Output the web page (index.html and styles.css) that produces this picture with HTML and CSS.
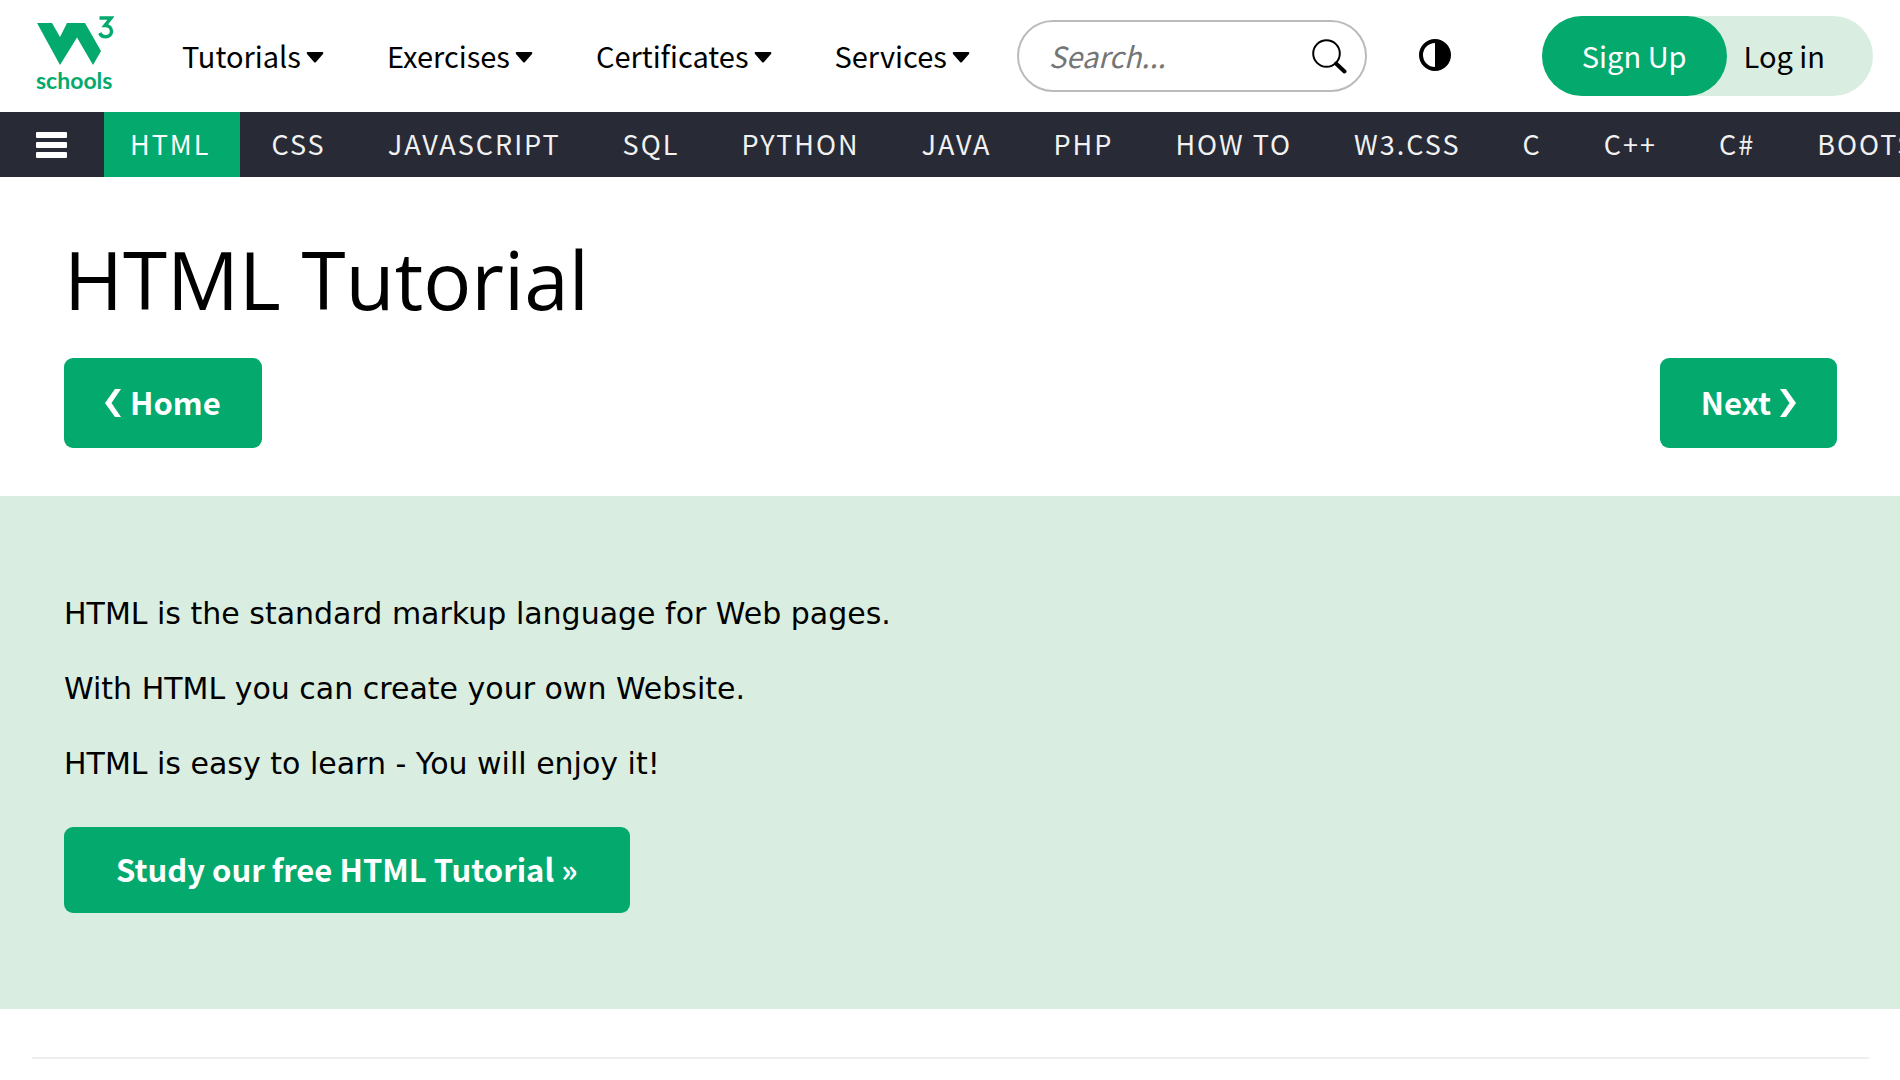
FILE: index.html
```html
<!DOCTYPE html>
<html lang="en">
<head>
<meta charset="utf-8">
<title>HTML Tutorial</title>
<link rel="stylesheet" href="styles.css">
</head>
<body>
<header class="topbar">
  <a class="logo" href="#" aria-label="W3Schools home">
    <svg class="logo-mark" viewBox="0 0 78 50" aria-hidden="true">
      <path class="logo-w" d="M1 7H16L24 21L31 7H49L65 35L57 49L41 21.500L24 49Z"/>
      <path class="logo-three" d="M63.500 2H75L69 9.500C73 9.500 75.500 12 75.500 15.300C75.500 18.700 73 20.800 69.700 20.800C67 20.800 64.800 19.500 63.800 17"/>
    </svg>
    <span class="logo-text">schools</span>
  </a>
  <nav class="menus" aria-label="Main">
    <a class="menu" href="#">Tutorials<svg class="caret" viewBox="0 0 18 11" aria-hidden="true"><path d="M1.500 0H16.500Q18 .5 17 2L10 10Q9 11 8 10L1 2Q0 .5 1.500 0Z"/></svg></a>
    <a class="menu" href="#">Exercises<svg class="caret" viewBox="0 0 18 11" aria-hidden="true"><path d="M1.500 0H16.500Q18 .5 17 2L10 10Q9 11 8 10L1 2Q0 .5 1.500 0Z"/></svg></a>
    <a class="menu" href="#">Certificates<svg class="caret" viewBox="0 0 18 11" aria-hidden="true"><path d="M1.500 0H16.500Q18 .5 17 2L10 10Q9 11 8 10L1 2Q0 .5 1.500 0Z"/></svg></a>
    <a class="menu" href="#">Services<svg class="caret" viewBox="0 0 18 11" aria-hidden="true"><path d="M1.500 0H16.500Q18 .5 17 2L10 10Q9 11 8 10L1 2Q0 .5 1.500 0Z"/></svg></a>
  </nav>
  <form class="search">
    <input class="search-input" type="text" placeholder="Search..." aria-label="Search">
    <button class="icon-button" type="button" aria-label="Search">
      <svg class="search-icon" viewBox="0 0 35 35" aria-hidden="true"><circle cx="14.500" cy="14.500" r="13.300"/><path d="M24 24.500L32.500 32.500"/></svg>
    </button>
  </form>
  <button class="icon-button contrast" type="button" aria-label="Toggle dark mode">
    <svg class="contrast-icon" viewBox="0 0 32 32" aria-hidden="true"><path fill-rule="evenodd" d="M16 0A16 16 0 1 1 16 32A16 16 0 1 1 16 0ZM16 4A12 12 0 0 0 16 28Z"/></svg>
  </button>
  <div class="account">
    <a class="signup" href="#">Sign Up</a>
    <a class="login" href="#">Log in</a>
  </div>
</header>
<nav class="subjects" aria-label="Subjects">
  <button class="icon-button burger" type="button" aria-label="Menu">
    <svg class="burger-icon" viewBox="0 0 31 26" aria-hidden="true"><rect width="31" height="6" rx="1"/><rect y="10" width="31" height="6" rx="1"/><rect y="20" width="31" height="6" rx="1"/></svg>
  </button>
  <a class="subject active" href="#">HTML</a>
  <a class="subject" href="#">CSS</a>
  <a class="subject" href="#">JAVASCRIPT</a>
  <a class="subject" href="#">SQL</a>
  <a class="subject" href="#">PYTHON</a>
  <a class="subject" href="#">JAVA</a>
  <a class="subject" href="#">PHP</a>
  <a class="subject" href="#">HOW TO</a>
  <a class="subject" href="#">W3.CSS</a>
  <a class="subject" href="#">C</a>
  <a class="subject" href="#">C++</a>
  <a class="subject" href="#">C#</a>
  <a class="subject" href="#">BOOTSTRAP</a>
</nav>
<main>
  <div class="title">
    <h1>HTML Tutorial</h1>
    <div class="pager">
      <a class="button" href="#"><svg class="chevron" viewBox="0 0 16 28" aria-hidden="true"><path d="M10 0H16L6.500 14L16 28H10L0 14Z"/></svg>Home</a>
      <a class="button" href="#">Next<svg class="chevron" viewBox="0 0 16 28" aria-hidden="true"><path d="M0 0H6L16 14L6 28H0L9.500 14Z"/></svg></a>
    </div>
  </div>
  <section class="intro">
    <p>HTML is the standard markup language for Web pages.</p>
    <p>With HTML you can create your own Website.</p>
    <p>HTML is easy to learn - You will enjoy it!</p>
    <a class="button study" href="#">Study our free HTML Tutorial »</a>
  </section>
  <hr class="rule">
</main>
</body>
</html>
```
FILE: styles.css
```css
:root {
  --green: #04aa6d;
  --mint: #d9eee1;
  --sans: "Noto Sans CJK SC", "Open Sans", sans-serif;
}

* { box-sizing: border-box; }

body {
  margin: 0;
  color: #000;
  background: #fff;
  font-family: "DejaVu Sans", sans-serif;
  font-size: 30px;
  overflow-x: hidden;
}

a { color: inherit; text-decoration: none; }

.topbar {
  display: flex;
  align-items: center;
  height: 112px;
  padding: 0 27px 0 36px;
  font-family: var(--sans);
  font-size: 29px;
}

.logo {
  display: flex;
  flex-direction: column;
  gap: 2px;
  width: 80px;
  padding-bottom: 4px;
  color: var(--green);
}

.logo-mark { width: 78px; height: 50px; }
.logo-w { fill: var(--green); }
.logo-three { fill: none; stroke: var(--green); stroke-width: 3.5; }

.logo-text {
  font-family: Lato, sans-serif;
  font-size: 23px;
  font-weight: 700;
  line-height: 24px;
}

.menus { display: flex; gap: 63px; margin-left: 66px; }
.menu { display: flex; align-items: center; gap: 5px; padding-bottom: 2px; }
.caret { width: 18px; height: 11px; margin-top: 4px; }

.search {
  display: flex;
  align-items: center;
  width: 350px;
  height: 72px;
  margin-left: 47px;
  padding: 0 18px 0 30px;
  border: 2px solid #bbb;
  border-radius: 36px;
}

.search-input {
  flex: 1;
  min-width: 0;
  padding: 0 0 2px;
  border: 0;
  outline: 0;
  background: none;
  font: italic 29px var(--sans);
}

.search-input::placeholder { color: #757575; }

.icon-button {
  display: flex;
  padding: 0;
  border: 0;
  background: none;
  cursor: pointer;
}

.search-icon { width: 35px; height: 35px; fill: none; stroke: #000; stroke-width: 2; }
.search-icon path { stroke-width: 4; stroke-linecap: round; }
.contrast { margin-left: 52px; padding-bottom: 2px; }
.contrast-icon { width: 32px; height: 32px; }

.account {
  display: flex;
  margin-left: auto;
  border-radius: 40px;
  background: var(--mint);
  line-height: 78px;
}

.signup {
  padding: 0 40px 2px;
  border-radius: 40px;
  background: var(--green);
  color: #fff;
}

.login { padding: 0 48px 2px 17px; }

.subjects {
  display: flex;
  height: 65px;
  overflow: hidden;
  background: #282a35;
  color: #f1f1f1;
  font-family: var(--sans);
  font-size: 27px;
  line-height: 63px;
  letter-spacing: 2px;
}

.burger { align-items: center; padding: 0 37px 0 36px; }
.burger-icon { width: 31px; height: 26px; fill: #fff; }
.subject { padding: 0 31px; white-space: nowrap; }
.active { padding: 0 30px 0 26px; background: var(--green); color: #fff; }

.title { padding: 48px 63px 48px 64px; }

h1 {
  margin: 0 0 26px;
  font: 400 80px/107px "Open Sans", sans-serif;
}

.pager { display: flex; justify-content: space-between; }

.button {
  display: inline-flex;
  align-items: center;
  gap: 9px;
  height: 90px;
  padding: 0 41px 4px;
  border-radius: 9px;
  background: var(--green);
  color: #fff;
  font-family: var(--sans);
  font-size: 31px;
  font-weight: 700;
}

.chevron { width: 16px; height: 28px; margin-top: 4px; fill: #fff; }

.intro { padding: 95px 64px 96px; background: var(--mint); }
.intro p { margin: 0 0 29px; line-height: 46px; }
.intro p:last-of-type { margin-bottom: 40px; }
.study { height: 86px; padding: 0 52px 4px; }

.rule {
  height: 2px;
  margin: 48px 31px 0 32px;
  border: 0;
  background: #eee;
}
```
